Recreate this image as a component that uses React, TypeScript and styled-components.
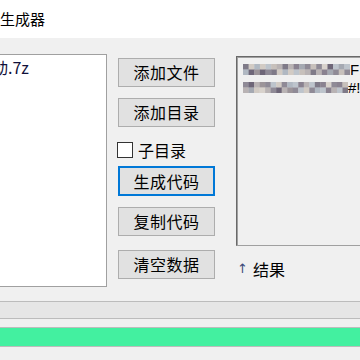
import React from "react";
import styled, { createGlobalStyle } from "styled-components";

const Global = createGlobalStyle`
  html, body { margin: 0; padding: 0; overflow: hidden; }
  body { width: 360px; height: 360px; background: #f0f0f0; }
`;

const FONT = `"Noto Sans CJK SC", "Noto Sans", "Liberation Sans", sans-serif`;

const Frame = styled.div`
  width: 360px;
  height: 360px;
  overflow: hidden;
  background: #f0f0f0;
  font-family: ${FONT};
  color: #000;
  display: flex;
  flex-direction: column;
`;

const TitleBar = styled.div`
  height: 38px;
  flex: none;
  background: #fff;
  display: flex;
  align-items: center;
  font-size: 15px;
  line-height: 20px;
  padding-bottom: 1px;
  box-sizing: border-box;
`;

const Body = styled.div`
  padding-top: 16px;
  display: flex;
  flex-direction: column;
`;

const MainRow = styled.div`
  display: flex;
  align-items: flex-start;
`;

const ListBox = styled.div`
  flex: none;
  margin-left: -30px;
  width: 137px;
  height: 233px;
  box-sizing: border-box;
  background: #fff;
  border: 1px solid #a0a0a0;
  padding: 2px 0 0 5px;
  font-size: 16px;
  line-height: 20px;
  white-space: nowrap;
  overflow: hidden;
  color: #10103a;
`;

const ButtonCol = styled.div`
  flex: none;
  margin-left: 11px;
  width: 97px;
  display: flex;
  flex-direction: column;
  padding-top: 4px;
`;

const Btn = styled.div<{ $mt?: number; $focus?: boolean; $h?: number }>`
  margin-top: ${(p) => p.$mt ?? 0}px;
  height: ${(p) => p.$h ?? 29}px;
  box-sizing: border-box;
  background: #e1e1e1;
  border: ${(p) => (p.$focus ? "2px solid #0078d7" : "1px solid #adadad")};
  display: flex;
  align-items: center;
  justify-content: center;
  font-size: 16px;
  letter-spacing: 0.5px;
  padding-bottom: 1px;
`;

const CheckRow = styled.label<{ $mt?: number }>`
  margin-top: ${(p) => p.$mt ?? 0}px;
  height: 17px;
  display: flex;
  align-items: center;
  gap: 5px;
  font-size: 16px;
  margin-left: -1px;
`;

const CheckBox = styled.span`
  width: 16px;
  height: 16px;
  box-sizing: border-box;
  border: 1px solid #333;
  background: #fff;
  flex: none;
`;

const ResultCol = styled.div`
  flex: none;
  margin-left: 21px;
  margin-top: 2px;
  display: flex;
  flex-direction: column;
`;

const TextArea = styled.div`
  width: 160px;
  height: 190px;
  box-sizing: border-box;
  border: 1px solid #a0a0a0;
  border-top-color: #696969;
  border-left-color: #696969;
  box-shadow: inset 1px 1px 0 #a0a0a0;
  background: #f0f0f0;
  padding: 6px 0 0 6px;
  overflow: hidden;
  display: flex;
  flex-direction: column;
  gap: 6px;
`;

const TextLine = styled.div`
  display: flex;
  align-items: center;
  height: 12px;
  white-space: nowrap;
  font-family: "Liberation Sans", sans-serif;
  font-size: 15px;
`;

const ResultLabel = styled.div`
  margin-top: 13px;
  font-size: 16px;
  line-height: 20px;
  display: flex;
  align-items: center;
  gap: 5px;
`;

const Arrow = styled.span`
  font-family: "DejaVu Sans", sans-serif;
  font-size: 13px;
  color: #3a4a78;
  margin-left: 1px;
`;

const Bar = styled.div<{ $h: number; $fill?: string; $mt: number }>`
  margin-top: ${(p) => p.$mt}px;
  margin-left: -10px;
  width: 400px;
  height: ${(p) => p.$h}px;
  box-sizing: border-box;
  border: 1px solid #bcbcbc;
  background: ${(p) => p.$fill ?? "#e6e6e6"};
  flex: none;
`;

const PALETTE = [
  "#8f8a96", "#b9b3b4", "#d2cbc4", "#6e6678", "#a5a9b2", "#c7c0bb",
  "#7f7a88", "#b0b8c2", "#9c9499", "#d8d2cc", "#8a8290", "#bdc4cc",
];

function Mosaic({ seed, width }: { seed: number; width: number }) {
  const cols = 19;
  const cell = width / cols;
  const rects: React.ReactElement[] = [];
  for (let r = 0; r < 2; r++) {
    for (let c = 0; c < cols; c++) {
      const v = (c * 7 + r * 13 + seed * 5 + ((c * c + seed) % 5)) % PALETTE.length;
      rects.push(
        <rect
          key={`${r}-${c}`}
          x={c * cell}
          y={r * 5.5}
          width={cell + 0.3}
          height={5.8}
          fill={PALETTE[v]}
        />
      );
    }
  }
  return (
    <svg width={width} height={11} style={{ flex: "none" }}>
      {rects}
    </svg>
  );
}

export default function App() {
  return (
    <>
      <Global />
      <Frame>
        <TitleBar>生成器</TitleBar>
        <Body>
          <MainRow>
            <ListBox>启动.7z</ListBox>
            <ButtonCol>
              <Btn>添加文件</Btn>
              <Btn $mt={11}>添加目录</Btn>
              <CheckRow $mt={14}>
                <CheckBox />
                子目录
              </CheckRow>
              <Btn $mt={8} $h={30} $focus>
                生成代码
              </Btn>
              <Btn $mt={11}>复制代码</Btn>
              <Btn $mt={14}>清空数据</Btn>
            </ButtonCol>
            <ResultCol>
              <TextArea>
                <TextLine>
                  <Mosaic seed={1} width={107} />
                  F:\
                </TextLine>
                <TextLine>
                  <Mosaic seed={4} width={105} />
                  #!
                </TextLine>
              </TextArea>
              <ResultLabel>
                <Arrow>↑</Arrow>
                结果
              </ResultLabel>
            </ResultCol>
          </MainRow>
          <Bar $mt={14} $h={18} />
          <Bar $mt={8} $h={20} $fill="#43f0a0" />
        </Body>
      </Frame>
    </>
  );
}
